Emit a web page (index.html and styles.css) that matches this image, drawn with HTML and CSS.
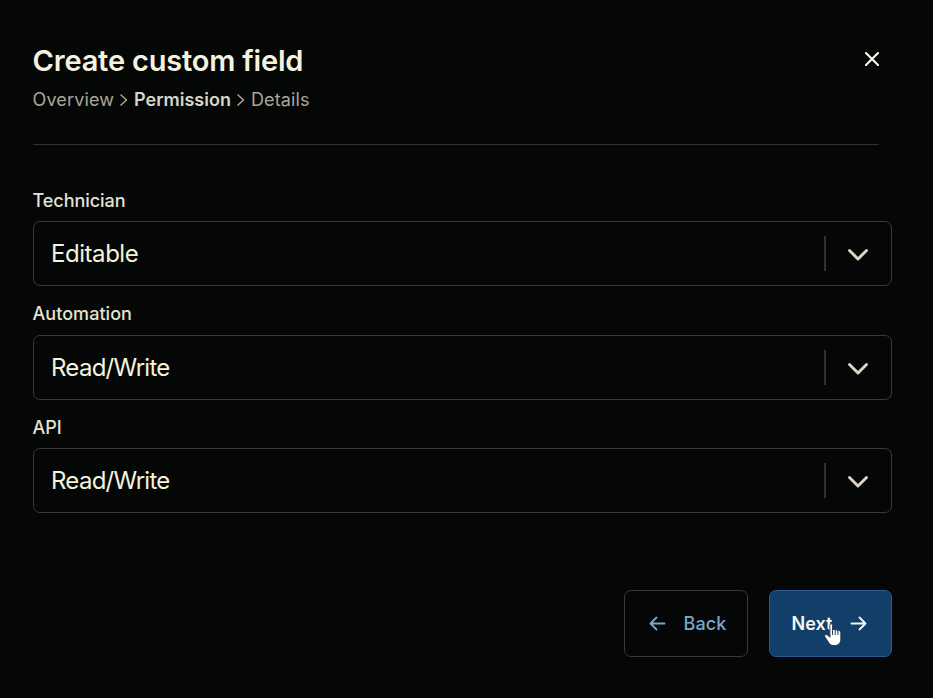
FILE: index.html
```html
<!DOCTYPE html>
<html lang="en">
<head>
<meta charset="utf-8">
<title>Create custom field</title>
<link rel="stylesheet" href="styles.css">
</head>
<body>
<main class="dialog">
  <header class="header">
    <div>
      <h1 class="title">Create custom field</h1>
      <nav class="crumbs">
        <span>Overview</span>
        <svg class="sep" viewBox="0 0 8 12"><path d="M1 1l5.500 5L1 11"/></svg>
        <strong class="current">Permission</strong>
        <svg class="sep" viewBox="0 0 8 12"><path d="M1 1l5.500 5L1 11"/></svg>
        <span>Details</span>
      </nav>
    </div>
    <button class="close" aria-label="Close"><svg viewBox="0 0 14 14"><path d="M1 1l12 12M13 1L1 13"/></svg></button>
  </header>
  <section class="fields">
    <div class="field">
      <label class="label">Technician</label>
      <div class="select"><span class="value editable">Editable</span><span class="toggle"><svg viewBox="0 0 22 14"><path d="M2.500 2.500l8.500 8.500 8.500-8.500"/></svg></span></div>
    </div>
    <div class="field">
      <label class="label automation">Automation</label>
      <div class="select"><span class="value">Read/Write</span><span class="toggle"><svg viewBox="0 0 22 14"><path d="M2.500 2.500l8.500 8.500 8.500-8.500"/></svg></span></div>
    </div>
    <div class="field">
      <label class="label">API</label>
      <div class="select"><span class="value">Read/Write</span><span class="toggle"><svg viewBox="0 0 22 14"><path d="M2.500 2.500l8.500 8.500 8.500-8.500"/></svg></span></div>
    </div>
  </section>
  <footer class="footer">
    <button class="button back"><svg class="arrow" viewBox="0 0 17 15"><path d="M15.500 7.500h-14M7.500 1.500l-6 6 6 6"/></svg><span>Back</span></button>
    <button class="button next"><span>Next</span><svg class="arrow" viewBox="0 0 17 15"><path d="M1.500 7.500h14M9.500 1.500l6 6-6 6"/></svg>
      <svg class="pointer" viewBox="0 0 18 24"><path d="M5.800 2.200C5.800.4 8.500.4 8.500 2.200V7c.5-.9 2.200-.8 2.600.3.6-.8 2.200-.5 2.500.6.8-.7 3.200-.2 3.200 1.300V16c0 4.300-2.600 6.600-6.600 6.600-3.400 0-4.900-1.600-6.300-4.200L.8 13.700c-.8-1.600 1.100-2.900 2.500-1.700l2.500 2z"/><path class="fingers" d="M8.500 7.500v4M11.200 7.800v3.700M13.900 8.500v3"/></svg>
    </button>
  </footer>
</main>
</body>
</html>
```

FILE: styles.css
```css
* { box-sizing: border-box; }
body {
  margin: 0;
  background: #040706;
  color: #f5f2df;
  font-family: Inter, "Liberation Sans", sans-serif;
}
svg {
  display: block;
  fill: none;
  stroke: currentColor;
  stroke-linecap: round;
  stroke-linejoin: round;
}
button { font: inherit; cursor: pointer; }
.dialog {
  width: 933px;
  height: 698px;
  padding: 42px 41px 41px 33px;
  display: flex;
  flex-direction: column;
}
.header {
  width: 846px;
  height: 103px;
  border-bottom: 1px solid #303332;
  display: flex;
  justify-content: space-between;
  align-items: flex-start;
}
.title {
  margin: 0 0 0 -0.500px;
  font-size: 29px;
  line-height: 38px;
  font-weight: 600;
  letter-spacing: -0.180px;
  white-space: nowrap;
}
.crumbs {
  display: flex;
  align-items: center;
  margin: 7px 0 0 -0.500px;
  font-size: 18px;
  line-height: 26px;
  letter-spacing: 0.140px;
  color: #aaa699;
}
.crumbs .sep {
  width: 8px;
  height: 12px;
  margin: 0 6px;
  stroke-width: 1.500;
}
.current { font-weight: 600; letter-spacing: 0; color: #d8d5c8; }
.close {
  width: 14px;
  height: 14px;
  margin-top: 9.500px;
  padding: 0;
  border: 0;
  background: none;
  color: #fffef5;
}
.close svg { width: 14px; height: 14px; stroke-width: 2.100; }
.fields {
  margin-top: 43px;
  display: flex;
  flex-direction: column;
  gap: 15.500px;
}
.label {
  display: block;
  height: 33px;
  margin-left: -0.500px;
  font-size: 18px;
  line-height: 25.500px;
  font-weight: 500;
  letter-spacing: -0.050px;
  color: #e5e2d2;
}
.automation { line-height: 24px; letter-spacing: 0.050px; }
.select {
  height: 65px;
  padding-left: 17px;
  border: 1px solid #383a39;
  border-radius: 7px;
  display: flex;
  align-items: center;
  justify-content: space-between;
}
.value {
  padding-top: 1px;
  font-size: 24px;
  line-height: 32px;
  letter-spacing: -0.720px;
}
.editable { letter-spacing: -0.450px; }
.toggle {
  width: 67px;
  height: 35px;
  padding-right: 1px;
  border-left: 2px solid #303332;
  display: flex;
  align-items: center;
  justify-content: center;
  color: #ddd5c5;
}
.toggle svg { width: 22px; height: 14px; stroke-width: 2.900; margin-top: 3px; }
.footer {
  margin-top: auto;
  display: flex;
  justify-content: flex-end;
  gap: 21px;
}
.button {
  position: relative;
  height: 67px;
  padding: 0;
  border-radius: 7px;
  display: flex;
  align-items: center;
  justify-content: center;
  gap: 18px;
  font-size: 18px;
}
.back {
  width: 124px;
  padding-left: 3px;
  border: 1px solid #383a39;
  background: #040706;
  color: #79a9c5;
  font-weight: 500;
  letter-spacing: 0.100px;
}
.next {
  width: 123px;
  padding-right: 2px;
  border: 1px solid #2c5c8d;
  background: #113f69;
  color: #f5f8f5;
  font-weight: 600;
}
.arrow { width: 17px; height: 15px; stroke-width: 1.800; margin-top: -1px; }
.pointer {
  position: absolute;
  left: 54px;
  top: 32px;
  width: 18px;
  height: 24px;
}
.pointer path { fill: #fff; stroke: #0b243a; stroke-width: 0.800; }
.pointer .fingers { fill: none; stroke-width: 0.900; }
```
